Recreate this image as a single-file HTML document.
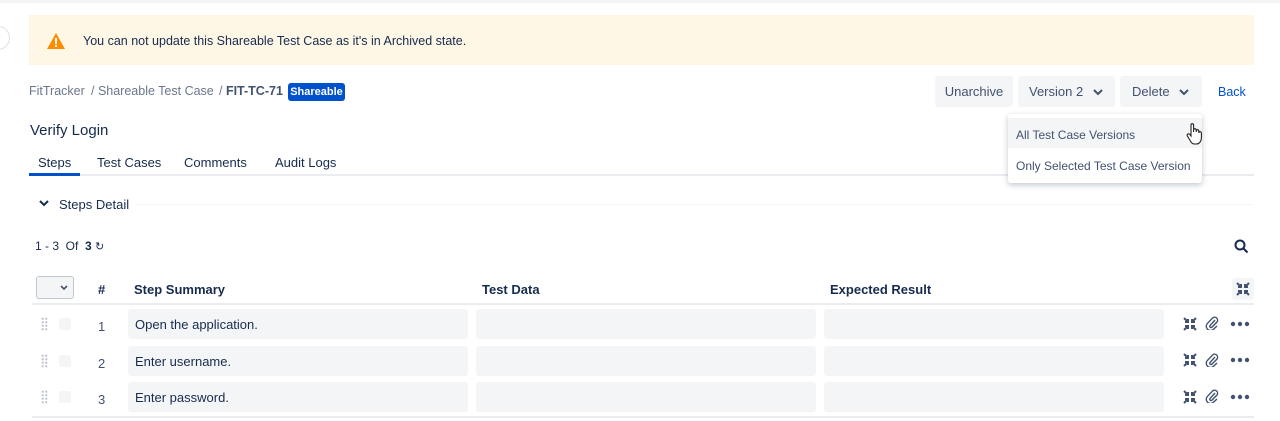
<!DOCTYPE html>
<html><head><meta charset="utf-8"><style>
*{box-sizing:border-box;margin:0;padding:0}
body{width:1280px;height:421px;background:#fff;font-family:"Liberation Sans",sans-serif;color:#172b4d;position:relative;overflow:hidden;font-size:13px}
.a{position:absolute;white-space:nowrap}
.btn{position:absolute;top:76px;height:31px;background:#f4f5f7;border-radius:3px;color:#42526e;font-size:13px;line-height:31px;text-align:center}
.cell{position:absolute;height:30px;background:#f4f5f7;border-radius:3px;font-size:13px;line-height:32px;padding-left:7px;color:#172b4d}
.th{position:absolute;top:282px;font-weight:bold;font-size:13px;color:#172b4d}
.bc{position:absolute;top:84px;color:#6b778c;font-size:13px;white-space:nowrap}
</style></head><body>
<div class="a" style="left:0;top:0;width:1280px;height:3px;background:#f4f5f7"></div>
<div class="a" style="left:-14px;top:26px;width:24px;height:24px;border-radius:50%;border:1px solid #dfe1e6;background:#fff"></div>
<div class="a" style="left:29px;top:15px;width:1225px;height:50px;background:#fff7e6"></div>
<svg class="a" style="left:47px;top:33px" width="18" height="16" viewBox="0 0 18 16"><path d="M9 0 L18 16 L0 16 Z" fill="#ff8b00"/><rect x="8" y="5" width="2" height="6" fill="#fff"/><rect x="8" y="12" width="2" height="2" fill="#fff"/></svg>
<div class="a" style="left:83px;top:34px;font-size:12.5px;color:#172b4d">You can not update this Shareable Test Case as it's in Archived state.</div>
<div class="bc" style="left:29px;font-size:12.5px">FitTracker</div>
<div class="bc" style="left:91px;font-size:12.5px">/ Shareable Test Case</div>
<div class="bc" style="left:219px;font-size:12.5px">/ <b style="color:#42526e">FIT-TC-71</b></div>
<div class="a" style="left:288px;top:83px;width:57px;height:18px;background:#0052cc;border-radius:3px;color:#fff;font-weight:bold;font-size:11px;line-height:18px;text-align:center">Shareable</div>
<div class="btn" style="left:935px;width:78px">Unarchive</div>
<div class="btn" style="left:1018px;width:97px;text-align:left;padding-left:11px">Version 2</div>
<div class="btn" style="left:1120px;width:82px;text-align:left;padding-left:12px">Delete</div>
<svg class="a" style="left:1093px;top:88px" width="10" height="8"><path d="M1 2 L5 6 L9 2" stroke="#42526e" stroke-width="2" fill="none"/></svg>
<svg class="a" style="left:1179px;top:88px" width="10" height="8"><path d="M1 2 L5 6 L9 2" stroke="#42526e" stroke-width="2" fill="none"/></svg>
<div class="a" style="left:1218px;top:85px;color:#0052cc;font-size:12.5px">Back</div>
<div class="a" style="left:30px;top:122px;font-size:15px;color:#172b4d">Verify Login</div>
<div class="a" style="left:29px;top:174px;width:1225px;height:2px;background:#ebecf0"></div>
<div class="a" style="left:29px;top:173px;width:51px;height:3px;background:#0052cc"></div>
<div class="a" style="left:38px;top:155px;font-size:13px;color:#172b4d">Steps</div>
<div class="a" style="left:97px;top:155px;font-size:13px;color:#172b4d">Test Cases</div>
<div class="a" style="left:184px;top:155px;font-size:13px;color:#172b4d">Comments</div>
<div class="a" style="left:275px;top:155px;font-size:13px;color:#172b4d">Audit Logs</div>
<svg class="a" style="left:39px;top:199px" width="10" height="8"><path d="M1 2 L5 6 L9 2" stroke="#172b4d" stroke-width="2" fill="none"/></svg>
<div class="a" style="left:59px;top:197px;font-size:13px;color:#172b4d">Steps Detail</div>
<div class="a" style="left:137px;top:204px;width:1117px;height:1px;background:#f4f5f7"></div>
<div class="a" style="left:1008px;top:114px;width:194px;height:69px;background:#fff;border-radius:3px;box-shadow:0 2px 6px rgba(9,30,66,.25)"></div>
<div class="a" style="left:1008px;top:118px;width:194px;height:30px;background:#f4f5f7"></div>
<div class="a" style="left:1016px;top:128px;font-size:12px;color:#42526e">All Test Case Versions</div>
<div class="a" style="left:1016px;top:159px;font-size:12px;color:#42526e">Only Selected Test Case Version</div>
<svg class="a" style="left:1186px;top:122px" width="18" height="24" viewBox="0 0 18 24"><path d="M5 14 V3 a1.3 1.3 0 0 1 2.6 0 V10 V8 a1.3 1.3 0 0 1 2.6 0 V10 V9 a1.3 1.3 0 0 1 2.6 0 V11 a1.3 1.3 0 0 1 2.6 0 V16 c0 3 -2 6 -5 6 h-2 c-2 0 -3 -1 -4 -3 l-3 -5 c-1 -1.5 1 -3 2.5 -1.5 Z" fill="#fff" stroke="#222" stroke-width="1.1"/></svg>
<div class="a" style="left:35px;top:239px;font-size:12px;color:#172b4d">1 - 3&nbsp; Of&nbsp; <b>3</b> <span style="font-size:11px">&#8635;</span></div>
<svg class="a" style="left:1234px;top:239px" width="15" height="15"><circle cx="6" cy="6" r="4.5" stroke="#172b4d" stroke-width="2" fill="none"/><path d="M9.5 9.5 L13.5 13.5" stroke="#172b4d" stroke-width="2"/></svg>
<div class="a" style="left:36px;top:276px;width:38px;height:23px;border:1px solid #c1c7d0;border-radius:3px;background:#f4f5f7"></div>
<svg class="a" style="left:60px;top:285px" width="8" height="6"><path d="M1 1 L4 4 L7 1" stroke="#42526e" stroke-width="1.6" fill="none"/></svg>
<div class="th" style="left:98px">#</div>
<div class="th" style="left:134px">Step Summary</div>
<div class="th" style="left:482px">Test Data</div>
<div class="th" style="left:830px">Expected Result</div>
<div class="a" style="left:1232px;top:278px;width:22px;height:22px;background:#f4f5f7;border-radius:3px"></div>
<div class="a" style="left:32px;top:303px;width:1222px;height:2px;background:#ebecf0"></div>
<div class="a" style="left:32px;top:416px;width:1222px;height:2px;background:#ebecf0"></div>
<svg width="0" height="0" style="position:absolute"><defs>
<symbol id="cmp" viewBox="0 0 14 14"><path d="M1 1 L5 5 M5 2 V5 H2 M13 1 L9 5 M9 2 V5 H12 M1 13 L5 9 M5 12 V9 H2 M13 13 L9 9 M9 12 V9 H12" stroke="#42526e" stroke-width="2" fill="none"/></symbol>
<symbol id="clip" viewBox="0 0 14 14"><path d="M10 4 L5 9.5 a1.3 1.3 0 0 0 1.8 1.8 L12 6 a3 3 0 0 0 -4.2 -4.2 L2.5 7.3 a4.2 4.2 0 0 0 6 6 L12 10" stroke="#42526e" stroke-width="1.4" fill="none"/></symbol>
<symbol id="dots" viewBox="0 0 20 6"><circle cx="3" cy="3" r="2.2" fill="#42526e"/><circle cx="10" cy="3" r="2.2" fill="#42526e"/><circle cx="17" cy="3" r="2.2" fill="#42526e"/></symbol>
</defs></svg>
<svg class="a" style="left:1236px;top:282px" width="14" height="14"><use href="#cmp"/></svg>

<div class="cell" style="left:128px;top:309px;width:340px">Open the application.</div>
<div class="cell" style="left:476px;top:309px;width:340px"></div>
<div class="cell" style="left:824px;top:309px;width:340px"></div>
<div class="cell" style="left:128px;top:346px;width:340px">Enter username.</div>
<div class="cell" style="left:476px;top:346px;width:340px"></div>
<div class="cell" style="left:824px;top:346px;width:340px"></div>
<div class="cell" style="left:128px;top:382px;width:340px">Enter password.</div>
<div class="cell" style="left:476px;top:382px;width:340px"></div>
<div class="cell" style="left:824px;top:382px;width:340px"></div>

<div class="a" style="left:41px;top:317px;width:7px;height:14px;background-image:radial-gradient(circle,#c1c7d0 1px,transparent 1.2px);background-size:3.5px 3.5px"></div>
<div class="a" style="left:41px;top:354px;width:7px;height:14px;background-image:radial-gradient(circle,#c1c7d0 1px,transparent 1.2px);background-size:3.5px 3.5px"></div>
<div class="a" style="left:41px;top:390px;width:7px;height:14px;background-image:radial-gradient(circle,#c1c7d0 1px,transparent 1.2px);background-size:3.5px 3.5px"></div>
<div class="a" style="left:59px;top:318px;width:12px;height:12px;background:#f4f5f7;border-radius:2px"></div>
<div class="a" style="left:59px;top:355px;width:12px;height:12px;background:#f4f5f7;border-radius:2px"></div>
<div class="a" style="left:59px;top:391px;width:12px;height:12px;background:#f4f5f7;border-radius:2px"></div>
<div class="a" style="left:98px;top:319px;color:#42526e">1</div>
<div class="a" style="left:98px;top:356px;color:#42526e">2</div>
<div class="a" style="left:98px;top:392px;color:#42526e">3</div>

<svg class="a" style="left:1183px;top:317px" width="14" height="14"><use href="#cmp"/></svg>
<svg class="a" style="left:1205px;top:316px" width="14" height="14"><use href="#clip"/></svg>
<svg class="a" style="left:1230px;top:321px" width="20" height="6"><use href="#dots"/></svg>
<svg class="a" style="left:1183px;top:353px" width="14" height="14"><use href="#cmp"/></svg>
<svg class="a" style="left:1205px;top:353px" width="14" height="14"><use href="#clip"/></svg>
<svg class="a" style="left:1230px;top:357px" width="20" height="6"><use href="#dots"/></svg>
<svg class="a" style="left:1183px;top:390px" width="14" height="14"><use href="#cmp"/></svg>
<svg class="a" style="left:1205px;top:389px" width="14" height="14"><use href="#clip"/></svg>
<svg class="a" style="left:1230px;top:394px" width="20" height="6"><use href="#dots"/></svg>
</body></html>
